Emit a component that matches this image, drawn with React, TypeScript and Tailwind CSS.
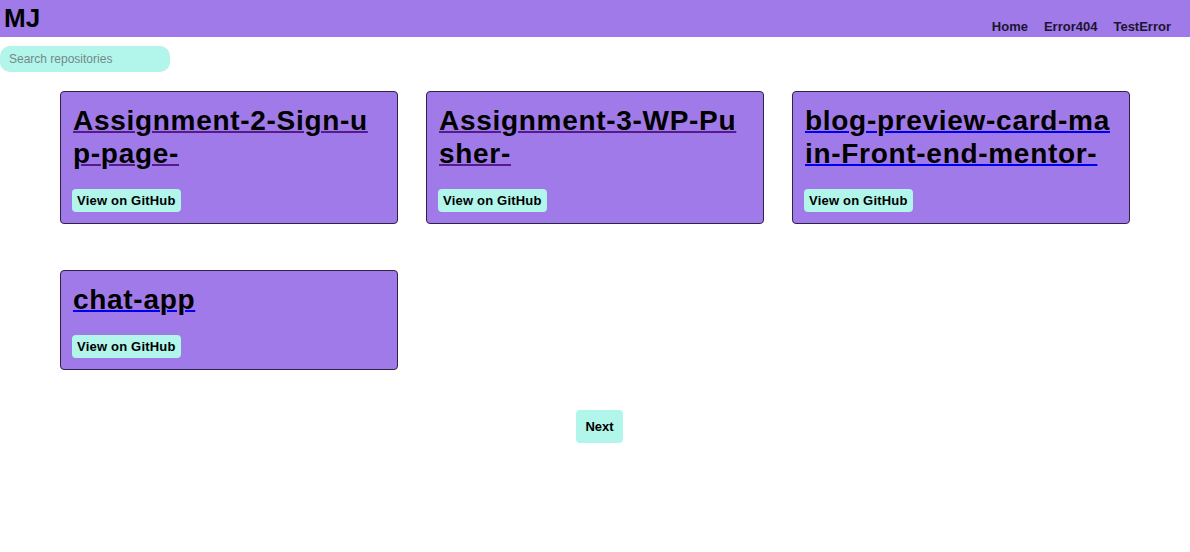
const repos = [
  { name: "Assignment-2-Sign-up-page-", visited: true },
  { name: "Assignment-3-WP-Pusher-", visited: true },
  { name: "blog-preview-card-main-Front-end-mentor-", visited: false },
  { name: "chat-app", visited: false },
];

function RepoCard({ name, visited }: { name: string; visited: boolean }) {
  return (
    <div className="rounded-[4px] border border-[#2e2346] bg-[#a07ae9] p-3 pb-[11px]">
      <a
        href="#"
        className={
          visited
            ? "block underline decoration-[#551a8b] decoration-2"
            : "block underline decoration-[#0000ee] decoration-2"
        }
      >
        <h2 className="break-all text-[28px] font-bold leading-[33px] tracking-[0.7px] text-black">
          {name}
        </h2>
      </a>
      <button className="-ml-px mt-[19px] h-[23px] rounded-[4px] bg-[#b2f5ea] px-[5px] text-[13px] font-bold tracking-[0.2px] text-black">
        View on GitHub
      </button>
    </div>
  );
}

export default function App() {
  return (
    <div className="min-h-[552px] bg-white font-['Liberation_Sans',Arial,sans-serif] text-black">
      <header className="flex h-[37px] items-start justify-between bg-[#a07ae9] pl-1 pr-[19px]">
        <h1 className="text-[26px] font-bold leading-[37px]">MJ</h1>
        <nav className="mt-[19px] flex gap-4 text-[13px] font-bold leading-[15px] text-[#1b1530]">
          <a href="#">Home</a>
          <a href="#">Error404</a>
          <a href="#">TestError</a>
        </nav>
      </header>

      <input
        type="text"
        placeholder="Search repositories"
        className="mt-[9px] block h-[26px] w-[170px] rounded-[10px] bg-[#b2f5ea] px-[9px] text-[12px] outline-none placeholder:text-[#74888a]"
      />

      <div className="mx-[60px] mt-[19px] grid grid-cols-3 gap-x-[28px] gap-y-[46px]">
        {repos.map((r) => (
          <RepoCard key={r.name} name={r.name} visited={r.visited} />
        ))}
      </div>

      <div className="mt-10 flex justify-center pl-[9px]">
        <button className="h-[33px] rounded-[4px] bg-[#b2f5ea] px-[9px] text-[13px] font-bold text-black">
          Next
        </button>
      </div>
    </div>
  );
}
